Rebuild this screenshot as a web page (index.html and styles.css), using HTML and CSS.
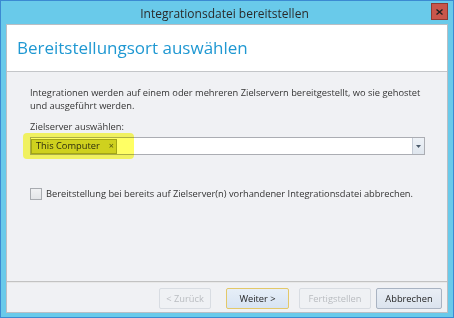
FILE: index.html
```html
<!DOCTYPE html>
<html lang="de">
<head>
<meta charset="utf-8">
<title>Integrationsdatei bereitstellen</title>
<link rel="stylesheet" href="styles.css">
</head>
<body>
<div class="window">
  <div class="titlebar">
    <span></span>
    <span class="title">Integrationsdatei bereitstellen</span>
    <button class="close" aria-label="Schließen">
      <svg width="7" height="6" viewBox="0 0 7 6"><path d="M0.5 0.5 L6.5 5.5 M6.5 0.5 L0.5 5.5" stroke="#222" stroke-width="1.4"/></svg>
    </button>
  </div>
  <div class="content">
    <div class="header">
      <h1>Bereitstellungsort auswählen</h1>
    </div>
    <div class="body">
      <p class="intro">Integrationen werden auf einem oder mehreren Zielservern bereitgestellt, wo sie gehostet<br>und ausgeführt werden.</p>
      <label class="field-label">Zielserver auswählen:</label>
      <div class="combo">
        <div class="combo-input">
          <span class="tag">This Computer<span class="tag-x">×</span></span>
        </div>
        <div class="combo-btn">
          <svg width="5" height="3" viewBox="0 0 5 3"><path d="M0 0 H5 L2.5 3 Z" fill="#4a5a6a"/></svg>
        </div>
        <div class="marker"></div>
      </div>
      <label class="check">
        <span class="box"></span>
        <span>Bereitstellung bei bereits auf Zielserver(n) vorhandener Integrationsdatei abbrechen.</span>
      </label>
    </div>
    <div class="footer">
      <button class="btn disabled btn-back">&lt; Zurück</button>
      <button class="btn default btn-next">Weiter &gt;</button>
      <button class="btn disabled btn-finish">Fertigstellen</button>
      <button class="btn btn-cancel">Abbrechen</button>
    </div>
  </div>
</div>
</body>
</html>
```

FILE: styles.css
```css
* { box-sizing: border-box; }
html, body { margin: 0; padding: 0; }
body {
  width: 454px;
  height: 318px;
  font-family: "Open Sans", "Noto Sans", sans-serif;
  font-size: 9.3px;
  color: #333;
}
.window {
  width: 454px;
  height: 318px;
  background: #69caea;
  border: 1px solid #3b8ad2;
  display: flex;
  flex-direction: column;
}
.titlebar {
  height: 23px;
  display: grid;
  grid-template-columns: 1fr auto 1fr;
  align-items: center;
  padding: 0 5px 0 0;
}
.title {
  font-size: 12px;
  color: #2a2a2a;
  padding-top: 1px;
}
.close {
  justify-self: end;
  align-self: start;
  margin-top: 2px;
  width: 17px;
  height: 17px;
  padding: 0;
  border: 1px solid #8f3a33;
  background: #c9564b;
  display: flex;
  align-items: center;
  justify-content: center;
}
.content {
  flex: 1;
  margin: 0 5px 4px 5px;
  border: 1px solid #b9bec4;
  display: flex;
  flex-direction: column;
  background: #f0f1f4;
}
.header {
  height: 47px;
  background: #fff;
  border-bottom: 1px solid #c4c6c9;
  padding: 13px 0 0 10px;
}
h1 {
  margin: 0;
  font-weight: 400;
  font-size: 17px;
  line-height: 20px;
  color: #1f98d2;
}
.body {
  flex: 1;
  padding: 14px 0 0 23px;
  white-space: nowrap;
}
.intro {
  margin: 0;
  line-height: 13px;
}
.field-label {
  display: block;
  margin-top: 8px;
  line-height: 13px;
}
.combo {
  position: relative;
  margin-top: 4px;
  width: 395px;
  height: 18px;
  display: flex;
  border: 1px solid #abadb3;
  background: #fff;
}
.combo-input {
  flex: 1;
  padding: 1px 0 0 0;
}
.tag {
  display: flex;
  align-items: center;
  height: 15px;
  width: 86px;
  padding: 0 0 1px 4px;
  background: #cfd14c;
  border: 1px solid #a3a634;
  line-height: 12px;
  color: #2c2c20;
}
.tag-x {
  margin-left: 9px;
  font-size: 9px;
  color: #55572a;
}
.combo-btn {
  width: 12px;
  border-left: 1px solid #c5ccd6;
  background: linear-gradient(#eef2f7, #dfe6ee);
  display: flex;
  align-items: center;
  justify-content: center;
}
.marker {
  position: absolute;
  left: -8px;
  top: -5px;
  width: 111px;
  height: 26px;
  background: rgba(255, 255, 40, 0.72);
  border-radius: 4px;
  filter: blur(0.6px);
  mix-blend-mode: multiply;
}
.check {
  display: flex;
  align-items: center;
  gap: 4px;
  margin-top: 32px;
  line-height: 13px;
}
.box {
  width: 12px;
  height: 12px;
  border: 1px solid #a8abb0;
  background: linear-gradient(#f0f1f3, #e3e5e8);
}
.footer {
  height: 31px;
  border-top: 1px solid #c2c2c2;
  box-shadow: inset 0 1px 0 #e8e8e8;
  display: flex;
  align-items: flex-start;
  justify-content: flex-end;
  padding: 6px 5px 0 0;
}
.btn {
  height: 21px;
  font-family: inherit;
  font-size: 9.3px;
  color: #1e1e1e;
  border: 1px solid #a9b3c2;
  border-radius: 2px;
  background: linear-gradient(#e9eef5, #dbe3ee);
  padding: 0;
}
.btn.disabled {
  color: #b9bcc0;
  border-color: #d8dce2;
  background: #eff1f4;
}
.btn.default {
  border-color: #e3c869;
  background: linear-gradient(#e6eef8, #d8e4f2);
}
.btn-back { width: 52px; }
.btn-next { width: 63px; margin-left: 15px; }
.btn-finish { width: 72px; margin-left: 10px; }
.btn-cancel { width: 66px; margin-left: 5px; }
```
